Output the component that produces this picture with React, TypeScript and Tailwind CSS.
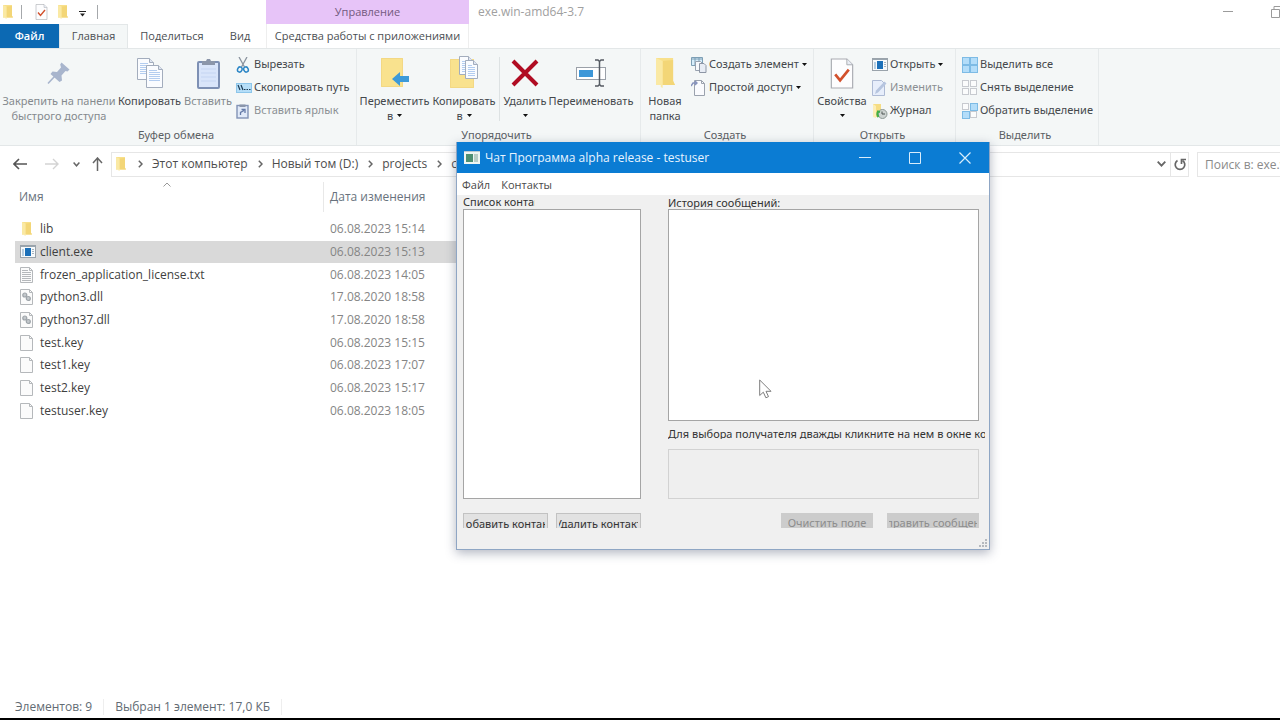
import type { ReactNode } from "react";

type IconProps = { className?: string };

function Caret({ className = "" }: IconProps) {
  return (
    <svg width="5" height="3" viewBox="0 0 5 3" className={`shrink-0 ${className}`}>
      <path d="M0 0h5L2.5 3z" fill="#111" />
    </svg>
  );
}

function FolderIcon({ className = "h-[14px] w-[10px]" }: IconProps) {
  return (
    <svg viewBox="0 0 20 30" preserveAspectRatio="none" className={`shrink-0 ${className}`}>
      <path d="M0 0h18v23l2 4H0z" fill="#f8e08b" />
      <path d="M7 3l11-1v21l2 4H7z" fill="#f3d677" />
      <path d="M0 0l7 3v27l-2-1v-2H0z" fill="#fae9a4" />
    </svg>
  );
}

function CheckedPageIcon({ className = "" }: IconProps) {
  return (
    <svg viewBox="0 0 24 32" className={`shrink-0 ${className}`}>
      <path d="M1 1h16l6 6v24H1z" fill="#fdfdfe" stroke="#a9acb2" strokeWidth="1.200" />
      <path d="M17 1v6h6" fill="#e9edf5" stroke="#a9acb2" />
      <path d="M5 17l5 6 9-11" fill="none" stroke="#d2502c" strokeWidth="2.800" />
    </svg>
  );
}

function PinIcon() {
  return (
    <svg width="24" height="24" viewBox="0 0 24 24">
      <path d="M14.500 1.500l8 7-2 2-2-.5-4 4.500.5 5-2.500 1.500-9-8 2-2.500 4.500.5 4-4.500-.8-3z" fill="#a8b5cd" />
      <path d="M7.500 15.500L1 22.500" stroke="#a8b5cd" strokeWidth="1.600" />
    </svg>
  );
}

function Page({ x, y, w = 16, h = 21 }: { x: number; y: number; w?: number; h?: number }) {
  return (
    <g transform={`translate(${x} ${y})`}>
      <path d={`M.5.5h${w - 5}l4 4v${h - 5}H.5z`} fill="#fafcff" stroke="#a3adbd" />
      <path d={`M${w - 4.5}.5v4h4`} fill="#dfe6f2" stroke="#a3adbd" />
      <path d={`M3 5.500h${w - 9}M3 7.500h${w - 6}M3 9.500h${w - 6}M3 11.500h${w - 6}M3 13.500h${w - 6}M3 15.500h${w - 6}`} stroke="#b3cdf0" />
    </g>
  );
}

function CopyIcon() {
  return (
    <svg width="26" height="31" viewBox="0 0 26 31">
      <Page x={0} y={0} w={17} h={22} />
      <Page x={9} y={7} w={17} h={23} />
    </svg>
  );
}

function PasteIcon({ className = "h-[31px] w-[23px]" }: IconProps) {
  return (
    <svg viewBox="0 0 23 31" className={className}>
      <rect x="1" y="4" width="21" height="26" rx="1" fill="#d9e5fa" stroke="#7d90b4" strokeWidth="2" />
      <path d="M4 11h15M4 15h15M4 19h15M4 23h15" stroke="#c5d5f2" />
      <path d="M5 3h4l1-2h3l1 2h4v4H5z" fill="#8b96aa" />
    </svg>
  );
}

function ScissorsIcon() {
  return (
    <svg width="14" height="16" viewBox="0 0 14 16" fill="none">
      <path d="M3 0l5.500 10M11 0L5.500 10" stroke="#8a939e" strokeWidth="1.300" />
      <ellipse cx="3.800" cy="12.500" rx="2.200" ry="2.600" stroke="#2b86c6" strokeWidth="1.500" transform="rotate(25 3.800 12.500)" />
      <ellipse cx="10" cy="12.500" rx="2.200" ry="2.600" stroke="#2b86c6" strokeWidth="1.500" transform="rotate(-25 10 12.500)" />
    </svg>
  );
}

function PathIcon() {
  return (
    <svg width="16" height="10" viewBox="0 0 16 10">
      <rect x=".5" y=".5" width="15" height="9" fill="#b5def8" stroke="#8dc6ea" />
      <path d="M2 2l2 5M5 2l2 5" stroke="#1d3c55" strokeWidth="1.200" />
      <path d="M8 6.500h1.500M10.500 6.500H12M13 6.500h1.500" stroke="#1d3c55" />
    </svg>
  );
}

function PasteLinkIcon() {
  return (
    <svg width="13" height="16" viewBox="0 0 13 16">
      <rect x="1" y="2.500" width="11" height="12.500" fill="#e1eaf8" stroke="#8293b6" strokeWidth="1.400" />
      <path d="M3.500 1.500h6V4h-6z" fill="#8b96aa" />
      <path d="M4.500 12V9.500L8 7.500M5.500 6.500H9V10" fill="none" stroke="#657ba8" strokeWidth="1.300" />
    </svg>
  );
}

function MoveIcon() {
  return (
    <svg width="28" height="32" viewBox="0 0 28 32">
      <path d="M0 1h22v29H0z" fill="#f9e28e" />
      <path d="M.5 1.500h21v28H.5z" fill="none" stroke="#f3d884" />
      <path d="M11 22l8-7v4h9v6h-9v4z" fill="#3d9ad8" />
    </svg>
  );
}

function CopyToIcon() {
  return (
    <svg width="29" height="34" viewBox="0 0 29 34">
      <path d="M0 3h24v29H0z" fill="#f9e28e" />
      <path d="M.5 3.500h23v28H.5z" fill="none" stroke="#f3d884" />
      <Page x={9} y={0} w={14} h={19} />
      <Page x={15} y={4} w={13} h={19} />
    </svg>
  );
}

function DeleteIcon() {
  return (
    <svg width="28" height="28" viewBox="0 0 28 28">
      <path d="M2 2l24 24M26 2L2 26" stroke="#b00c22" strokeWidth="4" />
    </svg>
  );
}

function RenameIcon() {
  return (
    <svg width="31" height="28" viewBox="0 0 31 28">
      <rect x=".5" y="8.500" width="29" height="12" fill="#fff" stroke="#9aa0a8" />
      <rect x="3" y="11" width="14" height="7" fill="#3d97d8" />
      <path d="M19 1h3l1.500 1.500L25 1h3M23.500 2v24M19 27h3l1.500-1.500L25 27h3" fill="none" stroke="#555b63" strokeWidth="1.500" />
    </svg>
  );
}

function NewItemIcon() {
  return (
    <svg width="16" height="16" viewBox="0 0 16 16">
      <path d="M.5.5h11v8H.5z" fill="#d8eefb" stroke="#7d9fb5" />
      <path d="M1 2h10M4 .5v8M8 .5v5" stroke="#7d9fb5" />
      <path d="M4.500 4.500h5l2 2v7h-7z" fill="#f7f9fc" stroke="#98a2b0" />
      <path d="M8.500 6.500h4.500l2 2v7H8.500z" fill="#e8edf5" stroke="#8d96a5" />
    </svg>
  );
}

function EasyAccessIcon() {
  return (
    <svg width="14" height="16" viewBox="0 0 14 16">
      <path d="M3.500.5h7l3 3v12h-10z" fill="#fafbfe" stroke="#9ba2ae" />
      <path d="M10.500.5v3h3" fill="none" stroke="#9ba2ae" />
      <path d="M0 6l2-3h4M4 1l2 2-2 2" fill="none" stroke="#8793bd" strokeWidth="1.400" />
    </svg>
  );
}

function AppIcon() {
  return (
    <svg width="16" height="13" viewBox="0 0 16 13" className="shrink-0">
      <rect x=".5" y=".5" width="15" height="12" fill="#f7fafc" stroke="#9aa3ab" />
      <path d="M1 1.500h14" stroke="#9aa5ae" />
      <rect x="2" y="4" width="2" height="7" fill="#b7cfe1" />
      <rect x="5" y="3" width="6" height="8" fill="#1b70b9" />
      <path d="M12 4.500h2M12 6.500h2M12 8.500h2" stroke="#a7b4bf" />
    </svg>
  );
}

function EditIcon() {
  return (
    <svg width="15" height="16" viewBox="0 0 15 16">
      <path d="M.5.5h9l3 3v12H.5z" fill="#e7eefb" stroke="#aebbd5" />
      <path d="M3 14l1-3.500 8.500-9 2 2-8.500 9z" fill="#b6c5df" />
    </svg>
  );
}

function HistoryIcon() {
  return (
    <svg width="16" height="16" viewBox="0 0 16 16">
      <path d="M1 1h8v9h1v4H1z" fill="#f6dd84" />
      <path d="M1 1l3 2v12l-3-1z" fill="#fceeb6" />
      <circle cx="10.500" cy="11" r="4.500" fill="#cdd3d1" stroke="#8d9894" />
      <path d="M6.500 14a5 5 0 01-.5-5.500l2 .5" fill="none" stroke="#3fae49" strokeWidth="2" />
      <path d="M10 8.500V11h3" fill="none" stroke="#4d5552" />
    </svg>
  );
}

function TilesIcon({ filled }: { filled: boolean[] }) {
  return (
    <svg width="16" height="16" viewBox="0 0 16 16">
      {filled.map((on, i) => (
        <rect
          key={i}
          x={(i % 2) * 8 + 0.5}
          y={Math.floor(i / 2) * 8 + 0.5}
          width={on ? 7 : 6}
          height={on ? 7 : 6}
          fill={on ? "#b3ddf9" : "#fbfcfc"}
          stroke={on ? "#7dbbe5" : "#c7cacf"}
        />
      ))}
    </svg>
  );
}

function FileIcon({ kind }: { kind: string }) {
  return (
    <svg width="13" height="16" viewBox="0 0 13 16" className="shrink-0">
      <path d="M.5.5h9l3 3v12H.5z" fill="#fbfbfb" stroke="#b5b8bb" />
      <path d="M9.500.5v3h3" fill="none" stroke="#b5b8bb" />
      {kind === "text" && <path d="M2 3.500h6M2 5.500h9M2 7.500h9M2 9.500h9M2 11.500h9M2 13.500h9" stroke="#b5b8bb" />}
      {kind === "dll" && (
        <g fill="#c3c8cc" stroke="#9ea4a9" strokeWidth="1.200">
          <circle cx="4.800" cy="6" r="2" />
          <circle cx="8.300" cy="9.500" r="2" />
        </g>
      )}
    </svg>
  );
}

type BigButtonProps = {
  icon: ReactNode;
  lines: string[];
  width: string;
  caret?: boolean;
  muted?: boolean;
};

function BigButton({ icon, lines, width, caret, muted }: BigButtonProps) {
  const last = lines.length - 1;
  return (
    <button
      className={`flex shrink-0 flex-col items-center whitespace-nowrap leading-[15px] ${width} ${muted ? "text-[#858a8e]" : "text-[#44484c]"}`}
    >
      <span className="flex h-[40px] items-center justify-center">{icon}</span>
      {lines.map((line, i) => (
        <span key={i} className="flex h-[15px] items-center gap-1">
          {line}
          {caret && i === last && <Caret />}
        </span>
      ))}
    </button>
  );
}

type SmallButtonProps = { icon: ReactNode; label: string; caret?: boolean; muted?: boolean };

function SmallButton({ icon, label, caret, muted }: SmallButtonProps) {
  return (
    <button className={`flex h-[23px] items-center whitespace-nowrap ${muted ? "text-[#8b8f93]" : "text-[#44484c]"}`}>
      <span className="flex w-[18px] shrink-0 items-center">{icon}</span>
      {label}
      {caret && <Caret className="ml-[3px]" />}
    </button>
  );
}

function Group({ title, width, children }: { title: string; width: string; children: ReactNode }) {
  return (
    <section className={`flex shrink-0 flex-col border-r border-[#e6eaeb] ${width}`}>
      <div className="flex flex-1 pt-1">{children}</div>
      <h2 className="h-[20px] pr-1 text-center leading-[20px] text-[#5b6064]">{title}</h2>
    </section>
  );
}

function Ribbon() {
  return (
    <div className="flex h-[98px] overflow-hidden border-y border-[#e3e7e8] bg-[#f4f7f7] font-['Noto_Sans','Open_Sans',sans-serif] text-[11px]">
      <Group title="Буфер обмена" width="w-[357px]">
        <BigButton icon={<PinIcon />} lines={["Закрепить на панели", "быстрого доступа"]} width="ml-[2px] w-[114px]" muted />
        <BigButton icon={<CopyIcon />} lines={["Копировать"]} width="w-[67px]" />
        <BigButton icon={<PasteIcon />} lines={["Вставить"]} width="w-[50px]" muted />
        <div className="ml-[3px] flex flex-col">
          <SmallButton icon={<ScissorsIcon />} label="Вырезать" />
          <SmallButton icon={<PathIcon />} label="Скопировать путь" />
          <SmallButton icon={<PasteLinkIcon />} label="Вставить ярлык" muted />
        </div>
      </Group>
      <Group title="Упорядочить" width="w-[284px]">
        <BigButton icon={<MoveIcon />} lines={["Переместить", "в"]} width="ml-[2px] w-[71px]" caret />
        <BigButton icon={<CopyToIcon />} lines={["Копировать", "в"]} width="w-[68px]" caret />
        <span className="my-1 ml-[1px] w-px bg-[#dde2e3]" />
        <BigButton icon={<DeleteIcon />} lines={["Удалить", ""]} width="w-[50px]" caret />
        <BigButton icon={<RenameIcon />} lines={["Переименовать"]} width="w-[82px]" />
      </Group>
      <Group title="Создать" width="w-[173px]">
        <BigButton icon={<FolderIcon className="h-[30px] w-[19px]" />} lines={["Новая", "папка"]} width="w-[48px]" />
        <div className="ml-[2px] flex flex-col">
          <SmallButton icon={<NewItemIcon />} label="Создать элемент" caret />
          <SmallButton icon={<EasyAccessIcon />} label="Простой доступ" caret />
        </div>
      </Group>
      <Group title="Открыть" width="w-[142px]">
        <BigButton icon={<CheckedPageIcon className="h-[31px] w-[24px]" />} lines={["Свойства", ""]} width="w-[56px]" caret />
        <div className="ml-[2px] flex flex-col">
          <SmallButton icon={<AppIcon />} label="Открыть" caret />
          <SmallButton icon={<EditIcon />} label="Изменить" muted />
          <SmallButton icon={<HistoryIcon />} label="Журнал" />
        </div>
      </Group>
      <Group title="Выделить" width="w-[143px]">
        <div className="ml-[6px] flex flex-col">
          <SmallButton icon={<TilesIcon filled={[true, true, true, true]} />} label="Выделить все" />
          <SmallButton icon={<TilesIcon filled={[false, false, false, false]} />} label="Снять выделение" />
          <SmallButton icon={<TilesIcon filled={[false, true, true, false]} />} label="Обратить выделение" />
        </div>
      </Group>
    </div>
  );
}

function Header() {
  return (
    <header className="flex h-[48px] text-[11px] text-[#4b4f53]">
      <div className="flex w-[266px] shrink-0 flex-col">
        <div className="flex h-[24px] items-center pl-[3px]">
          <FolderIcon />
          <span className="ml-[8px] h-[14px] w-px bg-[#a5a8ab]" />
          <button aria-label="Свойства" className="ml-[13px]">
            <CheckedPageIcon className="h-[16px] w-[13px]" />
          </button>
          <button aria-label="Новая папка" className="ml-[10px]">
            <FolderIcon />
          </button>
          <button aria-label="Настройка панели" className="ml-[11px] pt-1">
            <svg width="7" height="6" viewBox="0 0 7 6">
              <path d="M0 .5h7" stroke="#222" />
              <path d="M1 2.500h5L3.500 5.500z" fill="#222" />
            </svg>
          </button>
          <span className="ml-[11px] h-[14px] w-px bg-[#a5a8ab]" />
        </div>
        <nav className="flex h-[24px] items-stretch">
          <button className="w-[59px] bg-[#0c69b3] font-semibold text-white">Файл</button>
          <button className="w-[69px] border-x border-t border-[#e3e7e8] bg-[#f4f7f7]">Главная</button>
          <button className="w-[88px]">Поделиться</button>
          <button className="w-[48px]">Вид</button>
        </nav>
      </div>
      <div className="flex w-[203px] shrink-0 flex-col">
        <div className="flex h-[24px] items-center justify-center bg-[#e7c4f8] text-[#735a80]">Управление</div>
        <button className="h-[24px] whitespace-nowrap border-x border-[#eeeeee]">Средства работы с приложениями</button>
      </div>
      <div className="flex h-[24px] min-w-0 flex-1 items-center justify-between overflow-hidden pl-[9px]">
        <h1 className="text-xs text-[#a0a0a0]">exe.win-amd64-3.7</h1>
        <div className="flex items-center">
          <button aria-label="Свернуть">
            <svg width="10" height="10" viewBox="0 0 10 10">
              <path d="M0 4.500h10" stroke="#9b9b9b" />
            </svg>
          </button>
          <button aria-label="Развернуть" className="ml-[38px]">
            <svg width="9" height="12" viewBox="0 0 9 12" fill="none" stroke="#9b9b9b">
              <path d="M.5 3.500h8v8h-8zM3 3V.5h6" />
            </svg>
          </button>
        </div>
      </div>
    </header>
  );
}

function Chevron() {
  return (
    <svg width="5" height="8" viewBox="0 0 5 8" fill="none" className="shrink-0">
      <path d="M.8.8L4 4 .8 7.200" stroke="#666" strokeWidth="1.500" />
    </svg>
  );
}

function AddressBar() {
  const crumbs = ["Этот компьютер", "Новый том (D:)", "projects", "client"];
  return (
    <div className="flex h-[36px] items-center overflow-hidden text-xs text-[#4d4d4d]">
      <div className="flex w-[111px] shrink-0 items-center pl-[13px]">
        <button aria-label="Назад">
          <svg width="14" height="12" viewBox="0 0 14 12" fill="none" stroke="#555" strokeWidth="1.600">
            <path d="M6 1L1 6l5 5M1 6h13" />
          </svg>
        </button>
        <button aria-label="Вперед" className="ml-[18px]">
          <svg width="14" height="12" viewBox="0 0 14 12" fill="none" stroke="#d3d3d3" strokeWidth="1.400">
            <path d="M8 1l5 5-5 5M13 6H0" />
          </svg>
        </button>
        <button aria-label="Последние расположения" className="ml-[14px]">
          <svg width="7" height="5" viewBox="0 0 7 5" fill="none" stroke="#666" strokeWidth="1.500">
            <path d="M.6.600L3.500 3.800 6.400.6" />
          </svg>
        </button>
        <button aria-label="Вверх" className="ml-[12px]">
          <svg width="11" height="14" viewBox="0 0 11 14" fill="none" stroke="#666" strokeWidth="1.500">
            <path d="M1 6l4.500-5L10 6M5.500 1v13" />
          </svg>
        </button>
      </div>
      <div className="flex h-[25px] min-w-0 flex-1 items-center border border-[#e6e6e6] pl-1">
        <FolderIcon />
        <ol className="flex min-w-0 flex-1 items-center overflow-hidden whitespace-nowrap pl-[12px]">
          {crumbs.map((crumb) => (
            <li key={crumb} className="flex items-center">
              <Chevron />
              <a href="#" className="ml-[9px] mr-[10px]">{crumb}</a>
            </li>
          ))}
        </ol>
        <button aria-label="Предыдущие расположения" className="mr-[4px]">
          <svg width="9" height="6" viewBox="0 0 9 6" fill="none" stroke="#666" strokeWidth="1.800">
            <path d="M.7.700L4.500 4.700 8.300.7" />
          </svg>
        </button>
        <button aria-label="Обновить" className="flex h-full w-[18px] items-center justify-center border-l border-[#e6e6e6]">
          <svg width="12" height="13" viewBox="0 0 12 13" fill="none" stroke="#666" strokeWidth="1.700">
            <path d="M3.500 2.500A4.800 4.800 0 108.500 2.500" />
            <path d="M7.500 6V1.500H12" />
          </svg>
        </button>
      </div>
      <input
        type="text"
        aria-label="Поиск"
        placeholder="Поиск в: exe.win-amd64-3.7"
        className="ml-2 h-[25px] w-[83px] shrink-0 border border-r-0 border-[#e6e6e6] pl-[7px] placeholder:text-[#8a8a8a]"
      />
    </div>
  );
}

const files = [
  { name: "lib", date: "06.08.2023 15:14", kind: "folder" },
  { name: "client.exe", date: "06.08.2023 15:13", kind: "app" },
  { name: "frozen_application_license.txt", date: "06.08.2023 14:05", kind: "text" },
  { name: "python3.dll", date: "17.08.2020 18:58", kind: "dll" },
  { name: "python37.dll", date: "17.08.2020 18:58", kind: "dll" },
  { name: "test.key", date: "06.08.2023 15:15", kind: "blank" },
  { name: "test1.key", date: "06.08.2023 17:07", kind: "blank" },
  { name: "test2.key", date: "06.08.2023 15:17", kind: "blank" },
  { name: "testuser.key", date: "06.08.2023 18:05", kind: "blank" },
];

function FileTable() {
  return (
    <table className="ml-[15px] h-[240px] w-3/4 table-fixed text-xs">
      <thead>
        <tr className="h-[36px] text-left align-top text-[#68727d]">
          <th className="w-[309px] p-0 font-normal">
            <div className="flex h-[30px] items-center border-r border-[#e8e8e8] pl-1">
              <span className="w-[144px]">Имя</span>
              <svg width="8" height="5" viewBox="0 0 8 5" fill="none" stroke="#999" className="self-start">
                <path d="M.5 4.500L4 1l3.500 3.500" />
              </svg>
            </div>
          </th>
          <th className="p-0 pl-[6px] font-normal">
            <div className="flex h-[30px] items-center">Дата изменения</div>
          </th>
        </tr>
      </thead>
      <tbody>
        {files.map((file) => (
          <tr key={file.name} className={file.kind === "app" ? "bg-[#d9d9d9]" : ""}>
            <td className="p-0 pl-[5px]">
              <div className="flex items-center text-[#3f3f3f]">
                <span className="flex w-[20px] shrink-0 items-center">
                  {file.kind === "folder" && <FolderIcon className="ml-[2px] h-[14px] w-[10px]" />}
                  {file.kind === "app" && <AppIcon />}
                  {file.kind !== "folder" && file.kind !== "app" && <FileIcon kind={file.kind} />}
                </span>
                {file.name}
              </div>
            </td>
            <td className="p-0 pl-[6px] text-[#858585]">{file.date}</td>
          </tr>
        ))}
      </tbody>
    </table>
  );
}

function ClippedButton({ label, width, disabled }: { label: string; width: string; disabled?: boolean }) {
  return (
    <button
      disabled={disabled}
      className={`h-[15px] shrink-0 overflow-hidden px-[2px] ${width} ${
        disabled ? "bg-[#cccccc] text-[#8d8d8d]" : "border border-b-0 border-[#c2c2c2] bg-[#e2e2e2] text-[#333]"
      }`}
    >
      <span className="flex h-[15px] justify-center overflow-hidden whitespace-nowrap leading-[20px]">
        <span className="shrink-0">{label}</span>
      </span>
    </button>
  );
}

function ChatWindow() {
  return (
    <div
      role="dialog"
      aria-label="Чат Программа"
      className="absolute left-[456px] top-[142px] w-[534px] border border-t-0 border-[#8fa6c4] bg-[#f0f0f0] text-[11px] text-[#333] shadow-[0_3px_10px_rgba(60,70,100,0.4)]"
    >
      <div className="flex h-[31px] items-center bg-[#0b7cd3] pl-[7px] text-xs text-[#e8f4ff]">
        <svg width="16" height="13" viewBox="0 0 16 13" className="shrink-0">
          <rect width="16" height="13" fill="#f0f5f2" />
          <path d="M0 .5h16" stroke="#b9c8d0" />
          <rect x="2" y="3" width="7" height="8" fill="#4d8f72" />
          <rect x="10" y="3" width="4" height="8" fill="#b9cdc6" />
        </svg>
        <h2 className="ml-[5px] flex-1">Чат Программа alpha release - testuser</h2>
        <div className="flex items-center gap-[38px] pr-[18px]">
          <button aria-label="Свернуть">
            <svg width="12" height="12" viewBox="0 0 12 12">
              <path d="M0 5.500h12" stroke="#d9edfb" />
            </svg>
          </button>
          <button aria-label="Развернуть">
            <svg width="12" height="12" viewBox="0 0 12 12">
              <path d="M.5.5h11v11H.5z" fill="none" stroke="#d9edfb" />
            </svg>
          </button>
          <button aria-label="Закрыть">
            <svg width="12" height="12" viewBox="0 0 12 12">
              <path d="M.5.5l11 11M11.500.5l-11 11" stroke="#d9edfb" strokeWidth="1.200" />
            </svg>
          </button>
        </div>
      </div>
      <div className="flex h-[22px] items-center gap-[11px] bg-white pl-[5px] pt-[2px] text-[#4a4a4a]">
        <button>Файл</button>
        <button>Контакты</button>
      </div>
      <div className="flex gap-[27px] pl-[6px] pr-[4px] font-['Noto_Sans','Open_Sans',sans-serif]">
        <div className="flex w-[178px] shrink-0 flex-col">
          <label htmlFor="contacts" className="h-[14px] w-[72px] overflow-hidden whitespace-nowrap leading-[14px]">
            Список контактов:
          </label>
          <select id="contacts" size={10} className="h-[290px] border border-[#a5a5a5] bg-white" />
          <div className="mt-[14px] flex justify-between">
            <ClippedButton label="Добавить контакт" width="w-[85px]" />
            <ClippedButton label="Удалить контакт" width="w-[85px]" />
          </div>
        </div>
        <div className="flex min-w-0 flex-1 flex-col">
          <label htmlFor="history" className="h-[14px] leading-[16px]">История сообщений:</label>
          <textarea id="history" readOnly className="mr-[6px] h-[212px] resize-none border border-[#a5a5a5] bg-white" />
          <label htmlFor="message" className="mt-[5px] h-[13px] overflow-hidden whitespace-nowrap leading-[16px]">
            Для выбора получателя дважды кликните на нем в окне контактов.
          </label>
          <textarea id="message" disabled className="mr-[6px] mt-[10px] h-[50px] resize-none border border-[#d2d2d2] bg-[#efefef]" />
          <div className="mr-[6px] mt-[14px] flex justify-end gap-[14px]">
            <ClippedButton label="Очистить поле" width="w-[92px]" disabled />
            <ClippedButton label="Отправить сообщение" width="w-[92px]" disabled />
          </div>
        </div>
      </div>
      <div className="flex h-[21px] items-end justify-end p-[2px]">
        <svg width="8" height="8" viewBox="0 0 8 8" fill="#b5b9be">
          <path d="M6 0h2v2H6zM3 3h2v2H3zM6 3h2v2H6zM0 6h2v2H0zM3 6h2v2H3zM6 6h2v2H6z" />
        </svg>
      </div>
      <svg width="13" height="20" viewBox="0 0 13 20" className="absolute left-[302px] top-[237px]">
        <path d="M.7 1v15.500l3.600-3.300 2.600 5.600 2.600-1.200-2.500-5.300h5z" fill="#fff" stroke="#7d7d7d" />
      </svg>
    </div>
  );
}

export default function App() {
  return (
    <div className="relative flex min-h-screen flex-col overflow-hidden bg-white font-['Open_Sans','Noto_Sans',sans-serif]">
      <Header />
      <Ribbon />
      <AddressBar />
      <main className="flex-1">
        <FileTable />
      </main>
      <footer className="flex h-[24px] items-center border-b-2 border-black pl-[15px] text-xs text-[#626b73]">
        <span className="border-r border-[#eeeeee] pr-[11px]">Элементов: 9</span>
        <span className="border-r border-[#eeeeee] px-[11px]">Выбран 1 элемент: 17,0 КБ</span>
      </footer>
      <ChatWindow />
    </div>
  );
}
